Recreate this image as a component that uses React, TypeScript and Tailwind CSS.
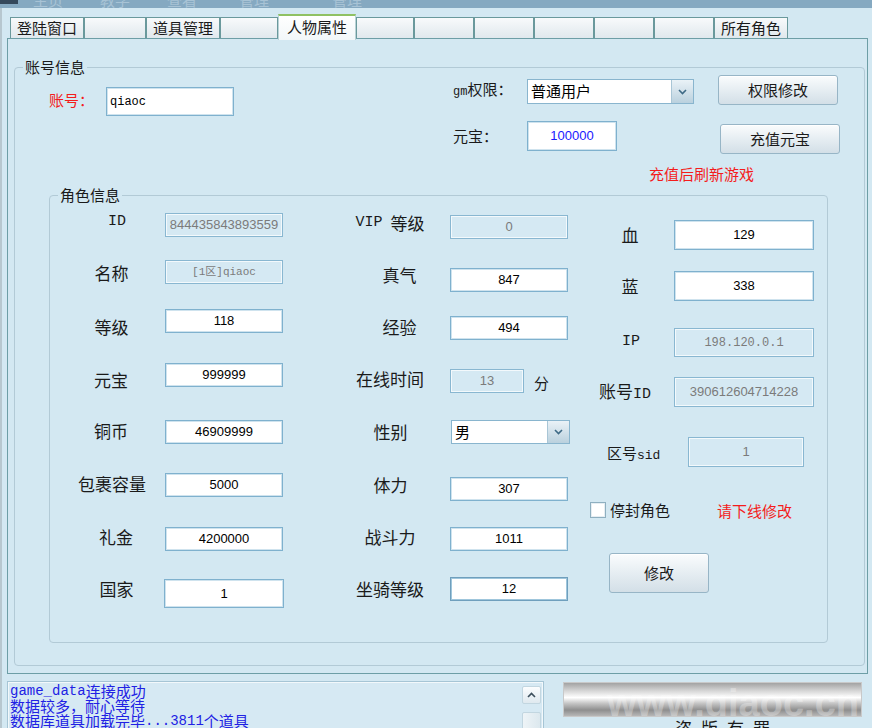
import type { ReactNode } from 'react';

const CJK = "font-['Noto_Sans_CJK_SC',sans-serif]";
const MONO = "font-['Liberation_Mono','Noto_Sans_CJK_SC',monospace]";
const NUM = "font-['Liberation_Sans','Noto_Sans_CJK_SC',sans-serif] text-[13px]";

function Field({
  v,
  c = '',
  dis = false,
  t = NUM,
  left = false,
}: {
  v: ReactNode;
  c?: string;
  dis?: boolean;
  t?: string;
  left?: boolean;
}) {
  return (
    <div
      className={`flex shrink-0 items-center overflow-hidden whitespace-nowrap border ${
        left ? 'justify-start pl-[3px]' : 'justify-center'
      } ${
        dis
          ? 'border-[#89b7d1] bg-[#d5e9f3] text-[#7b7b7b] shadow-[inset_0_0_0_1px_#f3f9fc]'
          : 'border-[#7fb1ce] bg-white text-black shadow-[inset_0_0_0_1px_#cfe3ee]'
      } ${t} ${c}`}
    >
      {v}
    </div>
  );
}

function Btn({ children, c = '' }: { children: ReactNode; c?: string }) {
  return (
    <div
      className={`flex shrink-0 items-center justify-center rounded-[3px] border border-[#97b5c6] bg-[linear-gradient(to_bottom,#fafcfd,#e4ecf1_55%,#d3dfe7)] text-[15px] text-[#1a1a1a] shadow-[inset_0_1px_0_#ffffff] ${c}`}
    >
      {children}
    </div>
  );
}

function Select({ v, c = '' }: { v: string; c?: string }) {
  return (
    <div className={`flex shrink-0 border border-[#89b5ce] bg-white ${c}`}>
      <div className="flex flex-1 items-center pl-[3px] text-[15px] text-black">{v}</div>
      <div className="flex w-[22px] items-center justify-center border-l border-[#a9c6d6] bg-[linear-gradient(to_bottom,#eaf2f7,#bad1de)]">
        <svg width="9" height="6" viewBox="0 0 9 6">
          <path d="M1 1 L4.5 4.5 L8 1" stroke="#3e6a86" strokeWidth="1.6" fill="none" />
        </svg>
      </div>
    </div>
  );
}

function Legend({ children, c = '' }: { children: ReactNode; c?: string }) {
  return (
    <span className={`absolute -top-[11px] bg-[#d3e8f2] px-[2px] text-[15px] leading-[20px] text-[#1a1a1a] ${c}`}>
      {children}
    </span>
  );
}

function Label({ children, c = '' }: { children: ReactNode; c?: string }) {
  return (
    <div className={`flex h-[24px] shrink-0 items-center justify-center whitespace-nowrap text-[17px] text-[#1a1a1a] ${c}`}>
      {children}
    </div>
  );
}

function TitleStrip() {
  return (
    <div className="relative h-[8px] shrink-0 overflow-hidden bg-[#85a9c1]">
      <div className="absolute left-0 top-0 h-[4px] w-[18px] bg-[#34485b]" />
      <div className="-mt-[10px] flex text-[15px] leading-[20px] text-[#a8c3d5]">
        <span className="ml-[33px]">主页</span>
        <span className="ml-[37px]">教学</span>
        <span className="ml-[37px]">查看</span>
        <span className="ml-[42px]">管理</span>
        <span className="ml-[63px]">管理</span>
      </div>
    </div>
  );
}

const tabs: { t: string; w: string; active?: boolean }[] = [
  { t: '登陆窗口', w: 'w-[74px]' },
  { t: '', w: 'w-[62px]' },
  { t: '道具管理', w: 'w-[74px]' },
  { t: '', w: 'w-[58px]' },
  { t: '人物属性', w: 'w-[78px]', active: true },
  { t: '', w: 'w-[58px]' },
  { t: '', w: 'w-[60px]' },
  { t: '', w: 'w-[60px]' },
  { t: '', w: 'w-[60px]' },
  { t: '', w: 'w-[60px]' },
  { t: '', w: 'w-[60px]' },
  { t: '所有角色', w: 'w-[74px]' },
];

function Tabs() {
  return (
    <div className="relative z-10 flex h-[30px] shrink-0 items-end pl-[10px]">
      {tabs.map((tab, i) =>
        tab.active ? (
          <div
            key={i}
            className={`-mb-[2px] flex h-[26px] shrink-0 items-center justify-center border-x border-t-2 border-x-[#b9d2d6] border-t-[#8fc163] bg-[linear-gradient(to_bottom,#ffffff,#f2f7f9)] pb-[1px] text-[15px] text-[#1a1a1a] ${tab.w}`}
          >
            {tab.t}
          </div>
        ) : (
          <div
            key={i}
            className={`flex h-[21px] shrink-0 items-center justify-center border border-b-0 border-[#6a999c] bg-[linear-gradient(to_bottom,#f8fafb,#e0e8ed)] text-[15px] text-[#1a1a1a] ${tab.w}`}
          >
            {tab.t}
          </div>
        ),
      )}
    </div>
  );
}

function AccountSection() {
  return (
    <div className="flex h-[127px] shrink-0 items-start">
      <div className="ml-[34px] mt-[22px] w-[57px] shrink-0 text-[15px] leading-[20px] text-[#f41c1c]">账号：</div>
      <Field v="qiaoc" left c="mt-[19px] h-[29px] w-[128px]" t={`${MONO} text-[12px]`} />
      <div className="ml-[219px] flex flex-col">
        <div className="mt-[7px] flex items-start">
          <div className="mt-[4px] w-[74px] shrink-0 text-[15px] leading-[20px] text-[#1a1a1a]">
            <span className={`${MONO} text-[12px]`}>gm</span>权限：
          </div>
          <Select v="普通用户" c="mt-[4px] h-[25px] w-[167px]" />
          <Btn c="ml-[24px] h-[30px] w-[120px]">权限修改</Btn>
        </div>
        <div className="mt-[16px] flex items-start">
          <div className="mt-[5px] w-[74px] shrink-0 text-[15px] leading-[20px] text-[#1a1a1a]">元宝：</div>
          <Field v="100000" c="h-[30px] w-[90px] !text-[#1a1aff]" />
          <Btn c="ml-[103px] mt-[3px] h-[30px] w-[120px]">充值元宝</Btn>
        </div>
        <div className="ml-[196px] mt-[10px] text-[15px] leading-[20px] text-[#f41c1c]">充值后刷新游戏</div>
      </div>
    </div>
  );
}

function Column1() {
  return (
    <div className="flex">
      <div className="flex w-[115px] shrink-0 flex-col">
        <Label c={`mt-[14px] pl-[19px] ${MONO} !text-[15px]`}>ID</Label>
        <Label c="mt-[27px] pl-[8px]">名称</Label>
        <Label c="mt-[30px] pl-[8px]">等级</Label>
        <Label c="mt-[29px] pl-[7px]">元宝</Label>
        <Label c="mt-[27px] pl-[7px]">铜币</Label>
        <Label c="mt-[29px] pl-[9px]">包裹容量</Label>
        <Label c="mt-[29px] pl-[17px]">礼金</Label>
        <Label c="mt-[28px] pl-[18px]">国家</Label>
      </div>
      <div className="flex w-[118px] shrink-0 flex-col">
        <Field v="844435843893559" dis c="mt-[17px] h-[24px] w-[118px]" />
        <Field v="[1区]qiaoc" dis c="mt-[23px] h-[24px] w-[118px]" t={`${MONO} text-[11px]`} />
        <Field v="118" c="mt-[25px] h-[24px] w-[118px]" />
        <Field v="999999" c="mt-[30px] h-[24px] w-[118px]" />
        <Field v="46909999" c="mt-[33px] h-[24px] w-[118px]" />
        <Field v="5000" c="mt-[29px] h-[24px] w-[118px]" />
        <Field v="4200000" c="mt-[30px] h-[24px] w-[118px]" />
        <Field v="1" c="-ml-px mt-[28px] h-[29px] w-[120px]" />
      </div>
    </div>
  );
}

function Column2() {
  return (
    <div className="flex">
      <div className="flex w-[167px] shrink-0 flex-col">
        <Label c="mt-[15px] pl-[47px]">
          <span className={`${MONO} mr-[8px] text-[15px]`}>VIP</span>
          <span>等级</span>
        </Label>
        <Label c="mt-[28px] pl-[66px]">真气</Label>
        <Label c="mt-[28px] pl-[66px]">经验</Label>
        <Label c="mt-[28px] pl-[47px]">在线时间</Label>
        <Label c="mt-[29px] pl-[48px]">性别</Label>
        <Label c="mt-[29px] pl-[48px]">体力</Label>
        <Label c="mt-[28px] pl-[47px]">战斗力</Label>
        <Label c="mt-[28px] pl-[47px]">坐骑等级</Label>
      </div>
      <div className="flex w-[120px] shrink-0 flex-col">
        <Field v="0" dis c="mt-[19px] h-[24px] w-[118px]" />
        <Field v="847" c="mt-[29px] h-[24px] w-[118px]" />
        <Field v="494" c="mt-[24px] h-[24px] w-[118px]" />
        <div className="mt-[29px] flex h-[24px] items-center">
          <Field v="13" dis c="h-[24px] w-[74px]" />
          <span className="ml-[10px] mt-[4px] text-[15px] text-[#1a1a1a]">分</span>
        </div>
        <Select v="男" c="ml-px mt-[27px] h-[24px] w-[119px]" />
        <Field v="307" c="mt-[33px] h-[24px] w-[118px]" />
        <Field v="1011" c="mt-[26px] h-[24px] w-[118px]" />
        <Field v="12" c="mt-[26px] h-[24px] w-[118px] !border-[#6f9fbd] !shadow-[inset_0_0_0_1px_#9fc6dc]" />
      </div>
    </div>
  );
}

function Column3() {
  return (
    <div className="flex flex-col">
      <div className="mt-[24px] flex h-[30px] items-center">
        <div className="w-[104px] shrink-0 pl-[16px] text-center text-[17px] text-[#1a1a1a]">血</div>
        <Field v="129" c="h-[30px] w-[140px]" />
      </div>
      <div className="mt-[21px] flex h-[30px] items-center">
        <div className="w-[104px] shrink-0 pl-[16px] text-center text-[17px] text-[#1a1a1a]">蓝</div>
        <Field v="338" c="h-[30px] w-[140px]" />
      </div>
      <div className="mt-[27px] flex h-[29px] items-center">
        <div className={`w-[104px] shrink-0 pl-[18px] text-center text-[15px] text-[#1a1a1a] ${MONO}`}>IP</div>
        <Field v="198.120.0.1" dis c="h-[29px] w-[140px]" t={`${MONO} text-[12px]`} />
      </div>
      <div className="mt-[20px] flex h-[30px] items-center">
        <div className="w-[104px] shrink-0 pl-[6px] text-center text-[17px] text-[#1a1a1a]">
          账号<span className={`${MONO} text-[15px]`}>ID</span>
        </div>
        <Field v="390612604714228" dis c="h-[30px] w-[140px]" />
      </div>
      <div className="mt-[30px] flex h-[30px] items-center">
        <div className="ml-[37px] w-[81px] shrink-0 pt-[4px] text-[15px] text-[#1a1a1a]">
          区号<span className={`${MONO} text-[13px]`}>sid</span>
        </div>
        <Field v="1" dis c="h-[30px] w-[116px]" />
      </div>
      <div className="mt-[32px] flex h-[22px] items-center">
        <div className="ml-[20px] h-[16px] w-[16px] shrink-0 border border-[#8eafc0] bg-white shadow-[inset_0_0_0_1px_#e6eef3]" />
        <span className="ml-[4px] text-[15px] text-[#1a1a1a]">停封角色</span>
        <span className="ml-[47px] mt-[3px] text-[15px] text-[#f41c1c]">请下线修改</span>
      </div>
      <Btn c="ml-[39px] mt-[32px] h-[40px] w-[100px]">修改</Btn>
    </div>
  );
}

function Bottom() {
  return (
    <div className="mt-[7px] flex shrink-0">
      <div className="ml-[7px] flex h-[60px] w-[537px] shrink-0 border border-[#a6c5d5] bg-[#d6e9f3] shadow-[inset_0_0_0_1px_#f2f8fb]">
        <div className="flex-1 pl-[2px] pt-[2px] text-[15px] text-[#2121e4]">
          <div className="flex h-[14px] items-center whitespace-nowrap leading-[14px]">
            <span className={`${MONO} text-[14px]`}>game_data</span>
            <span>连接成功</span>
          </div>
          <div className="flex h-[15px] items-center whitespace-nowrap leading-[14px]">数据较多，耐心等待</div>
          <div className="flex h-[15px] items-center whitespace-nowrap leading-[14px]">
            <span>数据库道具加载完毕</span>
            <span className={`${MONO} text-[14px]`}>...3811</span>
            <span>个道具</span>
          </div>
        </div>
        <div className="mr-[2px] flex w-[19px] flex-col pt-[4px]">
          <div className="flex h-[20px] items-center justify-center rounded-[2px] border border-[#c2d6e0] bg-[linear-gradient(to_bottom,#fbfdfe,#dfe9ef)]">
            <svg width="9" height="6" viewBox="0 0 9 6">
              <path d="M1 5 L4.5 1.5 L8 5" stroke="#3c4f5c" strokeWidth="1.6" fill="none" />
            </svg>
          </div>
          <div className="mt-[8px] h-[30px] rounded-[2px] border border-[#c2d6e0] bg-[linear-gradient(to_right,#eef4f7,#dce8ee)]" />
        </div>
      </div>
      <div className="ml-[19px] flex flex-col">
        <div className="relative mt-[1px] h-[35px] w-[299px] overflow-hidden border border-[#c9c9c9] bg-[linear-gradient(to_bottom,#a3a3a3_0%,#d2d2d2_22%,#ffffff_44%,#c4c4c4_62%,#8e8e8e_82%,#b7b7b7_100%)]">
          <span className="absolute -bottom-[7px] right-[2px] font-['Liberation_Sans',sans-serif] text-[38px] font-bold leading-[40px] text-white/30">
            www.qiaoc.cn
          </span>
        </div>
        <div className="ml-[112px] mt-[1px] flex gap-[9px] text-[17px] leading-[20px] text-[#1a1a1a]">
          <span>盗</span>
          <span>版</span>
          <span>有</span>
          <span>罪</span>
        </div>
      </div>
    </div>
  );
}

export default function App() {
  return (
    <div className={`relative flex h-[728px] w-[872px] flex-col overflow-hidden bg-[#d3e8f2] ${CJK}`}>
      <TitleStrip />
      <Tabs />
      <div className="ml-[7px] h-[636px] w-[861px] shrink-0 border border-[#6d9ea6]">
        <div className="relative ml-[6px] mt-[28px] flex h-[599px] w-[851px] flex-col rounded-[4px] border border-[#b2cad6]">
          <Legend c="left-[8px]">账号信息</Legend>
          <AccountSection />
          <div className="relative ml-[34px] h-[448px] w-[779px] shrink-0 rounded-[4px] border border-[#b2cad6]">
            <Legend c="left-[8px]">角色信息</Legend>
            <div className="flex">
              <Column1 />
              <Column2 />
              <Column3 />
            </div>
          </div>
        </div>
      </div>
      <Bottom />
      <div className="absolute left-0 top-[8px] h-[720px] w-[2px] bg-[#b7c7cf]" />
    </div>
  );
}
